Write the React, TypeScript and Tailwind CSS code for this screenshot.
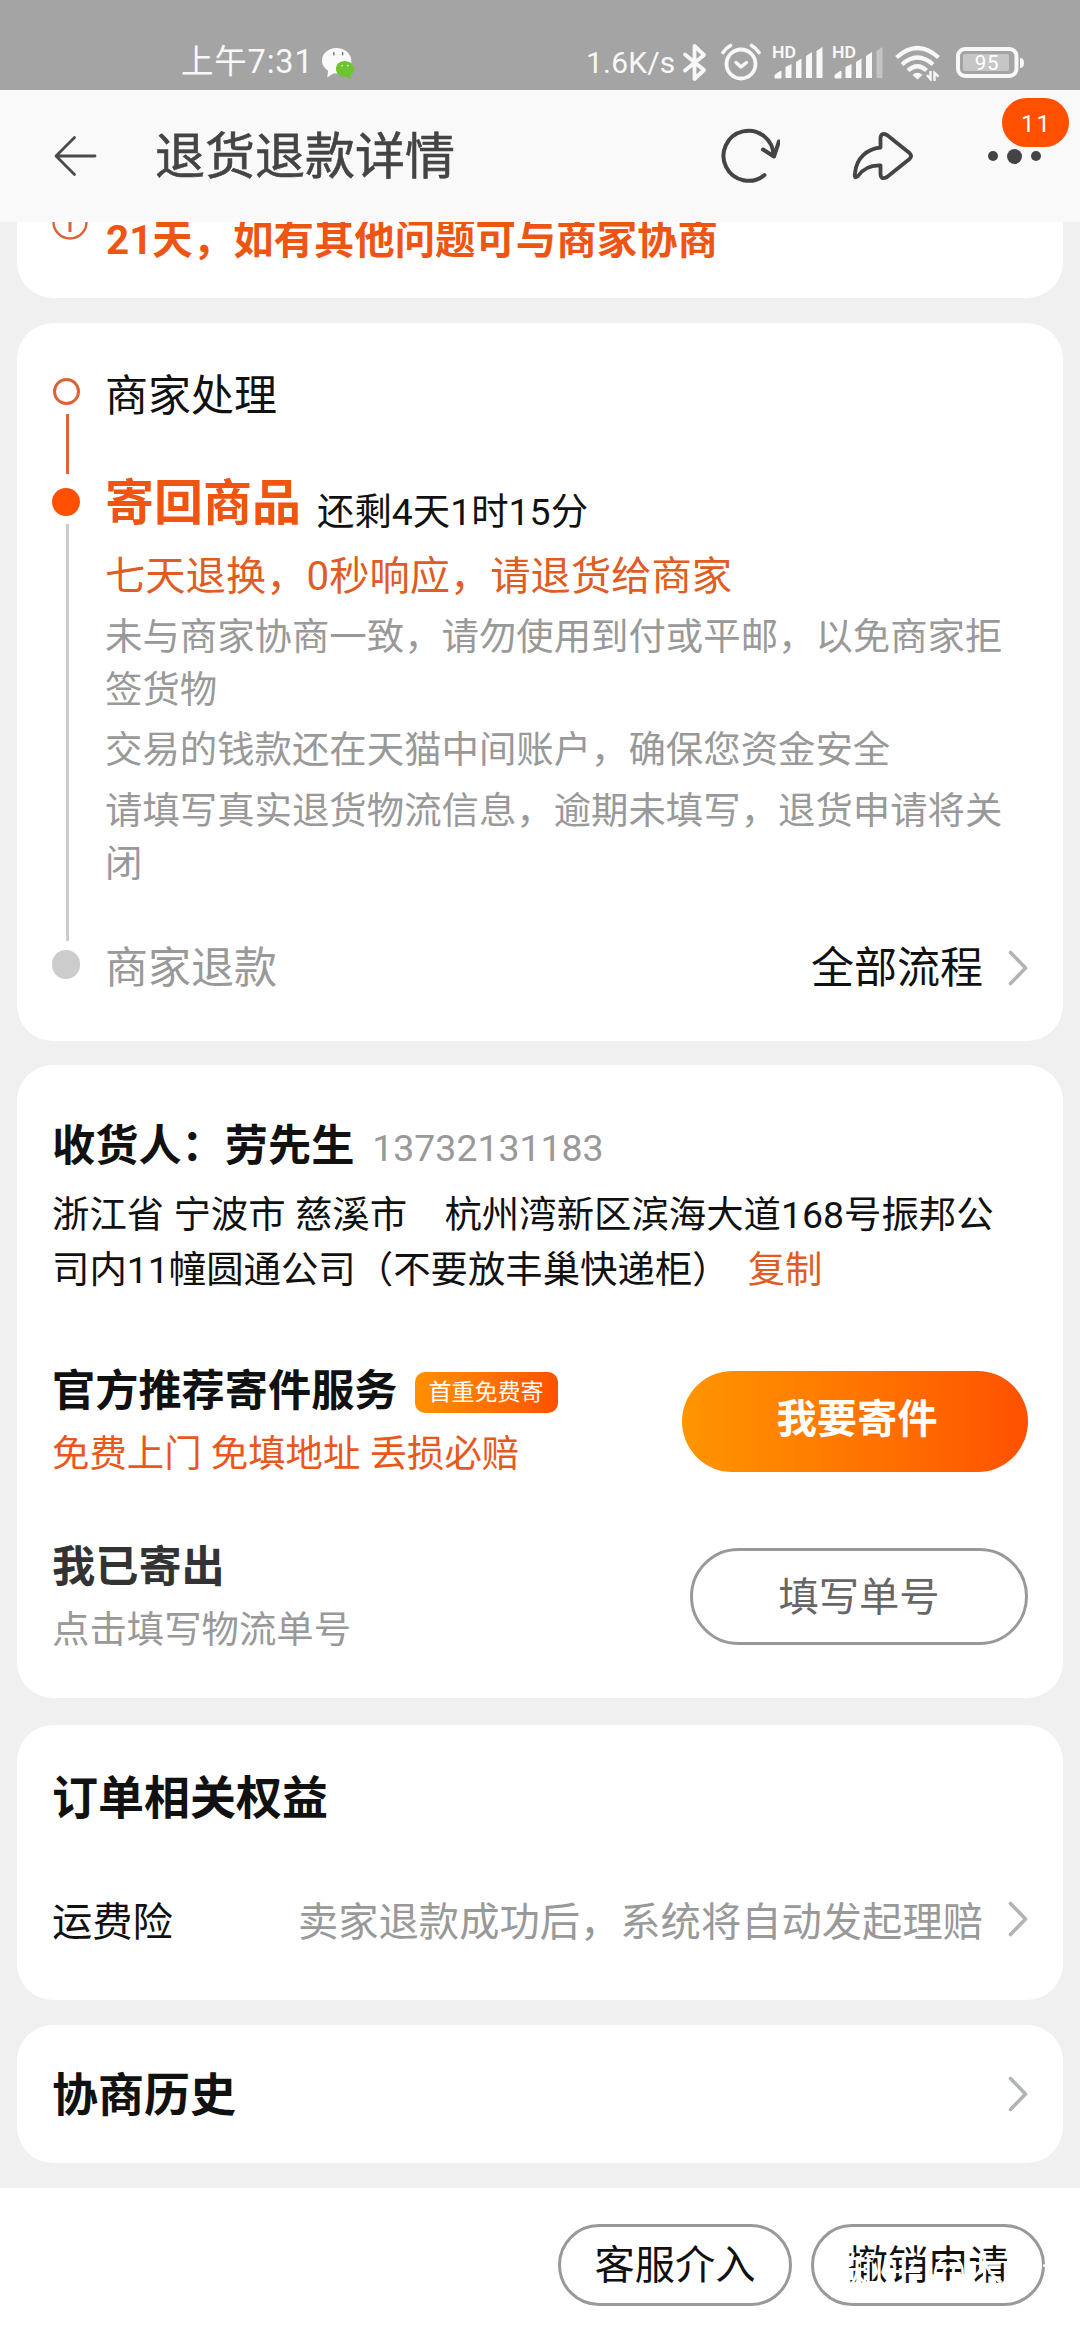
import React from 'react';

const Chevron: React.FC = () => (
  <svg className="w-[22px] h-9 shrink-0" viewBox="0 0 22 36" fill="none">
    <path d="M4.5 2.5 L19.5 18 L4.5 33.5" stroke="#b0b5b2" strokeWidth="3.6" strokeLinecap="round" strokeLinejoin="round" />
  </svg>
);

const WeChatIcon: React.FC = () => (
  <svg className="w-[33px] h-[33px]" viewBox="0 0 32 32">
    <path
      d="M14 1 C6 1 0 6.5 0 13 C0 17 2.4 20.6 6 23 L5 29.5 L11 25.6 C21 27 28.5 21 28.5 13.5 C28.5 6.5 22 1 14 1 Z"
      fill="#fafafa"
    />
    <ellipse cx="11.5" cy="6.5" rx="0.8" ry="1.8" fill="#777" />
    <ellipse cx="20" cy="6.5" rx="0.8" ry="1.8" fill="#777" />
    <path
      d="M22 13.5 C17 13.5 13.5 17 13.5 21.3 C13.5 26 18 29.5 23.5 28.8 L28 31 L27.6 27.3 C29.8 25.8 31 23.6 31 21.3 C31 17 27 13.5 22 13.5 Z"
      fill="#6cc52f"
    />
    <circle cx="19.5" cy="18" r="0.9" fill="#d8f2c4" />
    <circle cx="25" cy="18" r="0.9" fill="#d8f2c4" />
  </svg>
);

const BluetoothIcon: React.FC = () => (
  <svg className="w-[26px] h-[39px]" viewBox="0 0 26 39" fill="none">
    <path
      d="M3 11.5 L22 27 L12.5 36 V3 L22 12 L3 27.5"
      stroke="#f8f8f8"
      strokeWidth="3.8"
      strokeLinecap="round"
      strokeLinejoin="round"
    />
  </svg>
);

const AlarmIcon: React.FC = () => (
  <svg className="w-10 h-[38px]" viewBox="0 0 40 38" fill="none" stroke="#f8f8f8" strokeLinecap="round">
    <circle cx="20" cy="21" r="14.5" strokeWidth="3.8" />
    <path d="M2 9.5 Q5 5 9.5 2.5" strokeWidth="3.6" />
    <path d="M38 9.5 Q35 5 30.5 2.5" strokeWidth="3.6" />
    <path d="M15 19.5 L20 24 L25.5 19.5" strokeWidth="3.4" strokeLinejoin="round" />
  </svg>
);

const SignalIcon: React.FC<{ weak?: boolean }> = ({ weak }) => (
  <svg className="w-[52px] h-9 overflow-visible" viewBox="0 0 52 36" fill="#f8f8f8">
    <text x="0" y="14" fontFamily="Roboto, sans-serif" fontSize="17" fontWeight="600" textLength="24" lengthAdjust="spacingAndGlyphs">
      HD
    </text>
    <path d="M3 34 V31 L9 27 V34 Z" stroke="#f8f8f8" strokeLinejoin="round" />
    <path d="M13.5 23 L19.5 20 V34 H13.5 Z" />
    <path d="M24 18 L29.5 14.5 V34 H24 Z" />
    <path d="M34 12 L40 8 V34 H34 Z" />
    <path d="M44.5 7 L50.5 3 V34 H44.5 Z" fillOpacity={weak ? 0.4 : 1} />
  </svg>
);

const WifiIcon: React.FC = () => (
  <svg className="w-[46px] h-9" viewBox="0 0 46 36" fill="none" stroke="#f8f8f8" strokeWidth="4.2">
    <path d="M1.5 12.5 Q22.5 -6.5 43.5 12.5" />
    <path d="M7 19.5 Q22.5 5.5 38 19.5" />
    <path d="M13 25.5 Q22.5 17 31.5 25.5" />
    <path d="M17.5 30 Q22.5 25.5 27.5 30 L22.5 34.5 Z" fill="#f8f8f8" stroke="none" />
    <path d="M32 30 L35.5 34 V26 M39.5 36 V28 L43.5 31.5" strokeWidth="2.4" />
  </svg>
);

const BatteryIcon: React.FC = () => (
  <svg className="w-[70px] h-8" viewBox="0 0 70 32">
    <rect x="2" y="2" width="58.5" height="27" rx="7" fill="none" stroke="#f8f8f8" strokeWidth="4" />
    <rect x="7" y="7" width="46" height="17" rx="2" fill="#c6c6c6" />
    <path d="M64 11 Q68 11 68 16 Q68 21 64 21 Z" fill="#f8f8f8" />
    <text x="31" y="22.5" textAnchor="middle" fontFamily="Roboto, sans-serif" fontSize="20.5" letterSpacing="0.8" fill="#fff">
      95
    </text>
  </svg>
);

const StatusBar: React.FC = () => (
  <div className="h-[90px] shrink-0 bg-[#a4a4a4] flex items-start text-[#f8f8f8]">
    <span className="ml-[181px] mt-[42px] w-[141px] text-[32.5px] leading-10 tracking-[0.8px] whitespace-nowrap">上午7:31</span>
    <span className="mt-[47px]">
      <WeChatIcon />
    </span>
    <span className="ml-[231px] mt-[43px] w-[96px] text-[30px] leading-10 tracking-[0.2px] whitespace-nowrap">1.6K/s</span>
    <span className="mt-[43px]">
      <BluetoothIcon />
    </span>
    <span className="ml-[13px] mt-[43px]">
      <AlarmIcon />
    </span>
    <span className="ml-[11px] mt-[44px]">
      <SignalIcon />
    </span>
    <span className="ml-[8px] mt-[44px]">
      <SignalIcon weak />
    </span>
    <span className="ml-[11px] mt-[45px]">
      <WifiIcon />
    </span>
    <span className="ml-[15px] mt-[47px]">
      <BatteryIcon />
    </span>
  </div>
);

const Header: React.FC = () => (
  <header className="relative z-10 h-[132px] shrink-0 bg-[#f9f9f9] flex items-center text-[#444]">
    <button className="ml-[54px]">
      <svg className="w-11 h-11" viewBox="0 0 44 44" fill="none" stroke="#4a4a4a" strokeWidth="2.8" strokeLinecap="round">
        <path d="M2.5 22 H41 M20.5 3.5 L2 22 L20.5 40.5" strokeLinejoin="round" />
      </svg>
    </button>
    <h1 className="ml-[57px] w-[561px] pt-0.5 text-[50px] leading-[60px] [-webkit-text-stroke:0.6px_#444]">退货退款详情</h1>
    <button>
      <svg className="w-16 h-16" viewBox="715 124 64 64" fill="none" stroke="#444" strokeWidth="4" strokeLinecap="round" strokeLinejoin="round">
        <path d="M763.5 175 A25 25 0 1 1 772.5 156" />
        <path d="M762 149.5 L773 156.5 L778 141.5" />
      </svg>
    </button>
    <button className="ml-[69px]">
      <svg className="w-16 h-16" viewBox="848 124 64 64" fill="none" stroke="#444" strokeWidth="3.8" strokeLinecap="round" strokeLinejoin="round">
        <path d="M879.5 147.5 V138 Q880 132 886 135 L908.5 153 Q911.5 156 908.5 159 L886 177 Q880 180.5 879.5 174 V165.5 C869 165 861.5 169.5 856.5 176.5 Q853 179 854 173 C855.5 158 866 149 879.5 147.5 Z" />
      </svg>
    </button>
    <button className="ml-[75px] flex items-center gap-[9px]">
      <span className="w-2.5 h-2.5 rounded-full bg-[#444]"></span>
      <span className="w-[15px] h-[15px] rounded-full bg-[#444]"></span>
      <span className="w-2.5 h-2.5 rounded-full bg-[#444]"></span>
    </button>
    {/* Unread count */}
    <span className="absolute left-[1002px] top-2 w-[67px] h-[49px] rounded-full bg-[#ff5000] text-white text-[24px] tracking-[2px] pl-0.5 pt-0.5 flex items-center justify-center">
      11
    </span>
  </header>
);

const Card: React.FC<{ className: string; children: React.ReactNode }> = ({ className, children }) => (
  <section className={`mx-[17px] shrink-0 bg-white rounded-[36px] ${className}`}>{children}</section>
);

const App: React.FC = () => {
  return (
    <div className="w-[1080px] h-[2340px] overflow-hidden flex flex-col bg-[#f0f0f0] text-[#111] font-[Roboto,'Noto_Sans_CJK_SC',sans-serif]">
      <StatusBar />
      <Header />

      {/* Notice, scrolled partly under the header */}
      <div className="h-[76px] shrink-0 overflow-hidden mx-[17px] bg-white rounded-b-[36px]">
        <div className="-mt-[13px] pl-[35px] flex items-start">
          <svg className="w-9 h-9 -mt-[5px]" viewBox="0 0 36 36" fill="none" stroke="#dd6238" strokeWidth="2.4">
            <circle cx="18" cy="18" r="16.5" />
            <path d="M18 14 V28" strokeWidth="3" />
          </svg>
          <p className="ml-[18px] text-[40.4px] leading-[64px] font-bold text-[#ee5513]">21天，如有其他问题可与商家协商</p>
        </div>
      </div>

      {/* Refund progress */}
      <Card className="mt-[25px] h-[718px] flex">
        <div className="ml-[35px] pt-[55px] pb-[62px] w-7 flex flex-col items-center">
          <span className="w-[27px] h-[27px] shrink-0 rounded-full border-[3px] border-[#dd6238]"></span>
          <span className="mt-[9px] ml-0.5 w-[3px] h-[60px] shrink-0 bg-[#e0643a]"></span>
          <span className="mt-[14px] w-7 h-7 shrink-0 rounded-full bg-[#ff5000]"></span>
          <span className="mt-2 ml-0.5 w-[3px] flex-1 bg-[#ccc]"></span>
          <span className="mt-[9px] w-7 h-[29px] shrink-0 rounded-full bg-[#ccc]"></span>
        </div>
        <div className="ml-[25px] mr-[35px] pt-[45px] flex-1 whitespace-nowrap">
          <p className="text-[43px] leading-[56px]">商家处理</p>
          <div className="mt-[50px] h-[60px] flex items-start">
            <span className="text-[49px] leading-[60px] font-bold text-[#f05411]">寄回商品</span>
            <span className="ml-[16px] mt-2 text-[37.4px] leading-[60px]">还剩4天1时15分</span>
          </div>
          <p className="mt-[15px] text-[40.3px] leading-[56px] text-[#df5c22]">七天退换，0秒响应，请退货给商家</p>
          <div className="mt-[6px] text-[37.4px] leading-[53px] text-[#999]">
            <p>
              未与商家协商一致，请勿使用到付或平邮，以免商家拒
              <br />
              签货物
            </p>
            <p className="mt-[7px]">交易的钱款还在天猫中间账户，确保您资金安全</p>
            <p className="mt-2">
              请填写真实退货物流信息，逾期未填写，退货申请将关
              <br />
              闭
            </p>
          </div>
          <div className="mt-[49px] flex items-center text-[43px] leading-[56px]">
            <span className="flex-1 text-[#999]">商家退款</span>
            <span className="mr-[23px]">全部流程</span>
            <Chevron />
          </div>
        </div>
      </Card>

      {/* Return address and shipping */}
      <Card className="mt-6 h-[633px] pl-[35px] pr-[35px] pt-[54px]">
        <div className="flex items-baseline">
          <span className="text-[43.2px] leading-[56px] font-bold">收货人：劳先生</span>
          <span className="ml-[18px] text-[37.4px] text-[#999]">13732131183</span>
        </div>
        <p className="mt-[12px] text-[37.4px] leading-[55px] whitespace-nowrap">
          浙江省 宁波市 慈溪市　杭州湾新区滨海大道168号振邦公
          <br />
          司内11幢圆通公司（不要放丰巢快递柜）
          <span className="ml-[18px] text-[#df5c22]">复制</span>
        </p>

        <div className="mt-[66px] flex items-start justify-between">
          <div>
            <div className="flex items-center">
              <span className="text-[43.2px] leading-[56px] font-bold">官方推荐寄件服务</span>
              <span className="ml-[17px] w-[143px] h-[41px] rounded-[10px] bg-gradient-to-r from-[#ff9000] to-[#ff5000] text-white text-[23px] pt-0.5 flex items-center justify-center">
                首重免费寄
              </span>
            </div>
            <p className="mt-[8px] text-[37.4px] leading-[52px] text-[#e8581b]">免费上门 免填地址 丢损必赔</p>
          </div>
          <button className="mt-[7px] w-[346px] h-[101px] rounded-full bg-gradient-to-r from-[#ff9500] to-[#ff5000] text-white text-[40.3px] font-bold pb-0.5 pl-1">
            我要寄件
          </button>
        </div>

        <div className="mt-[60px] flex items-start justify-between">
          <div>
            <p className="text-[43.2px] leading-[56px] font-bold text-[#333]">我已寄出</p>
            <p className="mt-[8px] text-[37.4px] leading-[52px] text-[#999]">点击填写物流单号</p>
          </div>
          <button className="mt-[8px] w-[338px] h-[97px] rounded-full border-[3px] border-[#999] text-[#666] text-[40.3px] pt-1">
            填写单号
          </button>
        </div>
      </Card>

      {/* Order benefits */}
      <Card className="mt-[27px] h-[275px] pl-[35px] pr-[35px] pt-[43px]">
        <h2 className="text-[46px] leading-[60px] font-bold">订单相关权益</h2>
        <div className="mt-[67px] flex items-start text-[40.3px] leading-[56px]">
          <span className="flex-1">运费险</span>
          <span className="mr-[23px] text-[#999]">卖家退款成功后，系统将自动发起理赔</span>
          <span className="pt-[6px] leading-none">
            <Chevron />
          </span>
        </div>
      </Card>

      {/* Negotiation history */}
      <Card className="mt-[25px] h-[138px] pl-[35px] pr-[35px] flex items-center justify-between">
        <h2 className="pt-0.5 text-[46px] leading-[60px] font-bold">协商历史</h2>
        <Chevron />
      </Card>

      {/* Bottom actions */}
      <footer className="relative mt-[25px] flex-1 bg-white flex items-start justify-end gap-[19px] pr-[35px] pt-9">
        <button className="w-[234px] h-[82px] rounded-full border-[3px] border-[#999] text-[40.3px] pt-0.5">客服介入</button>
        <button className="w-[234px] h-[82px] rounded-full border-[3px] border-[#999] text-[40.3px] pt-0.5">撤销申请</button>
        <span className="absolute left-[846px] top-[61px] text-[38px] leading-[44px] text-white whitespace-nowrap">知乎 @木诗诗</span>
      </footer>
    </div>
  );
};

export default App;
